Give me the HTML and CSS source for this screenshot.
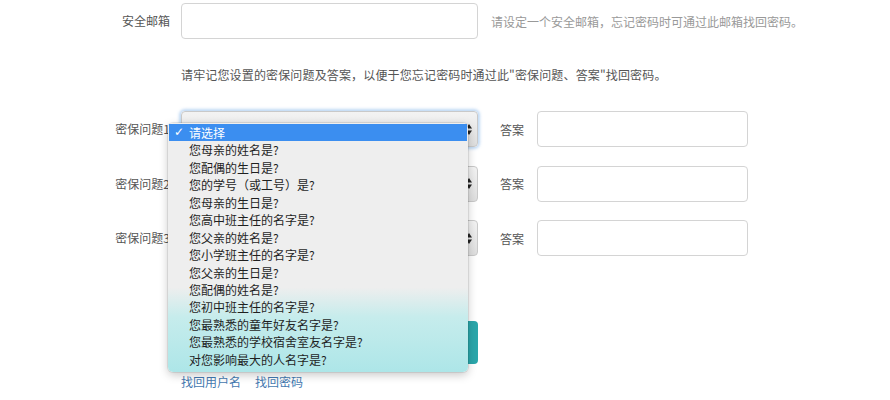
FILE: index.html
```html
<!DOCTYPE html>
<html lang="zh-CN">
<head>
<meta charset="utf-8">
<title>密保设置</title>
<link rel="stylesheet" href="styles.css">
</head>
<body>
<div class="form">
  <div class="row">
    <label class="lbl">安全邮箱</label>
    <input class="text email" type="text">
    <span class="help">请设定一个安全邮箱，忘记密码时可通过此邮箱找回密码。</span>
  </div>
  <p class="notice">请牢记您设置的密保问题及答案，以便于您忘记密码时通过此"密保问题、答案"找回密码。</p>
  <div class="row q">
    <label class="lbl">密保问题1</label>
    <div class="select focus"><svg class="arrows" viewBox="0 0 6 11" width="6" height="11"><polygon points="0,4.5 3,0 6,4.5"/><polygon points="0,6.5 3,11 6,6.5"/></svg></div>
    <label class="ans-lbl">答案</label>
    <input class="text answer" type="text">
  </div>
  <div class="row q">
    <label class="lbl">密保问题2</label>
    <div class="select"><svg class="arrows" viewBox="0 0 6 11" width="6" height="11"><polygon points="0,4.5 3,0 6,4.5"/><polygon points="0,6.5 3,11 6,6.5"/></svg></div>
    <label class="ans-lbl">答案</label>
    <input class="text answer" type="text">
  </div>
  <div class="row q">
    <label class="lbl">密保问题3</label>
    <div class="select"><svg class="arrows" viewBox="0 0 6 11" width="6" height="11"><polygon points="0,4.5 3,0 6,4.5"/><polygon points="0,6.5 3,11 6,6.5"/></svg></div>
    <label class="ans-lbl">答案</label>
    <input class="text answer" type="text">
  </div>
  <div class="row btn-row">
    <span class="lbl"></span>
    <button class="submit" type="button"></button>
  </div>
  <div class="row links">
    <span class="lbl"></span>
    <a class="link" href="#">找回用户名</a>
    <a class="link" href="#">找回密码</a>
  </div>

  <ul class="menu">
    <li class="sel"><span class="check">✓</span>请选择</li>
    <li>您母亲的姓名是?</li>
    <li>您配偶的生日是?</li>
    <li>您的学号（或工号）是?</li>
    <li>您母亲的生日是?</li>
    <li>您高中班主任的名字是?</li>
    <li>您父亲的姓名是?</li>
    <li>您小学班主任的名字是?</li>
    <li>您父亲的生日是?</li>
    <li>您配偶的姓名是?</li>
    <li>您初中班主任的名字是?</li>
    <li>您最熟悉的童年好友名字是?</li>
    <li>您最熟悉的学校宿舍室友名字是?</li>
    <li>对您影响最大的人名字是?</li>
  </ul>
</div>
</body>
</html>
```

FILE: styles.css
```css
html, body {
  margin: 0;
  padding: 0;
  background: #fff;
}
body {
  font-family: "Noto Sans CJK SC", "Noto Sans", sans-serif;
  font-size: 12px;
  color: #555;
}
.form {
  position: relative;
  padding-top: 3px;
  width: 890px;
}
.row {
  display: flex;
  align-items: center;
}
.lbl {
  width: 170px;
  box-sizing: border-box;
  text-align: right;
  margin-right: 11px;
  flex: none;
  color: #555;
  line-height: 18px;
}
.text {
  box-sizing: border-box;
  height: 36px;
  border: 1px solid #d4d4d4;
  border-radius: 4px;
  background: #fff;
  margin: 0;
  padding: 0 8px;
  outline: none;
}
.email {
  width: 297px;
}
.help {
  margin-left: 13px;
  color: #999;
}
.notice {
  margin: 27px 0 0 181px;
  line-height: 18px;
  color: #555;
  letter-spacing: 0.15px;
}
.q {
  margin-top: 18.5px;
}
.notice + .q {
  margin-top: 27px;
}
.select {
  box-sizing: border-box;
  width: 297px;
  height: 36px;
  border: 1px solid #c9c9c9;
  border-radius: 4px;
  background: linear-gradient(#f3f3f3, #dedede);
  display: flex;
  align-items: center;
  justify-content: flex-end;
  padding-right: 5px;
}
.select.focus {
  box-shadow: 0 0 3px 2px rgba(140, 185, 235, 0.55);
}
.arrows {
  fill: #222;
}
.ans-lbl {
  margin-left: 22px;
  margin-right: 13px;
  color: #555;
}
.answer {
  width: 211px;
}
.btn-row {
  margin-top: 65px;
}
.submit {
  width: 297px;
  height: 43px;
  border: 0;
  border-radius: 4px;
  background: #2aa6aa;
  margin: 0;
}
.links {
  margin-top: 9px;
}
.link {
  color: #4479b0;
  text-decoration: none;
  line-height: 18px;
  margin-right: 14px;
}
.menu {
  position: absolute;
  left: 168px;
  top: 123px;
  width: 300px;
  margin: 0;
  padding: 1px 0 4px;
  list-style: none;
  border-radius: 5px;
  background: linear-gradient(#eeeeee 0%, #eeeeee 66%, #c6ecec 78%, #ade6e8 100%);
  box-shadow: 0 3px 10px rgba(0, 0, 0, 0.22), 0 0 0 1px rgba(0, 0, 0, 0.08);
  color: #1f1f1f;
}
.menu li {
  height: 17.45px;
  line-height: 17.45px;
  padding-left: 21px;
  white-space: nowrap;
}
.menu li.sel {
  position: relative;
  background: #3b8ef0;
  color: #fff;
  margin: 0 1px;
  padding-left: 20px;
}
.check {
  position: absolute;
  left: 5px;
  top: 0;
  font-family: "DejaVu Sans", sans-serif;
  font-size: 12px;
  font-weight: bold;
}
```
